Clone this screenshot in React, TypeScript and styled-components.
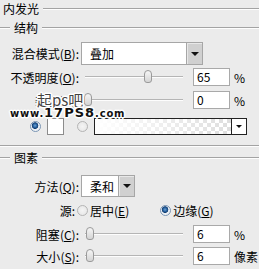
import React from 'react'
import styled, { createGlobalStyle } from 'styled-components'

const GlobalStyle = createGlobalStyle`
  body {
    margin: 0;
    background: #ebebeb;
    font-family: "Noto Sans CJK SC", "Noto Sans", sans-serif;
    font-size: 12px;
    color: #000;
  }
`

const Panel = styled.div`
  position: relative;
  width: 259px;
  height: 269px;
  overflow: hidden;
  background: #ebebeb;
  display: flex;
  flex-direction: column;
`

const groove = `
  height: 0;
  border-top: 1px solid #a3a3a3;
  border-bottom: 1px solid #fdfdfd;
`

const outline = `
  text-shadow:
    1px 0 #fff, -1px 0 #fff, 0 1px #fff, 0 -1px #fff,
    1px 1px #fff, -1px -1px #fff, 1px -1px #fff, -1px 1px #fff,
    2px 0 #f4f4f4, -2px 0 #f4f4f4, 0 2px #f4f4f4, 0 -2px #f4f4f4;
`

const Legend = styled.div<{ $indent: number; $height: number }>`
  display: flex;
  align-items: center;
  height: ${({ $height }) => $height}px;
  line-height: 14px;
  padding-left: ${({ $indent }) => ($indent ? 0 : 3)}px;

  &::before {
    content: '';
    width: ${({ $indent }) => $indent}px;
    margin-right: ${({ $indent }) => ($indent ? 4 : 0)}px;
    ${groove}
  }

  &::after {
    content: '';
    flex: 1;
    margin-left: 4px;
    ${groove}
  }
`

const Divider = styled.div`
  ${groove}
  margin-top: 10px;
`

const Row = styled.div<{ $height: number; $gap?: number }>`
  display: flex;
  align-items: center;
  height: ${({ $height }) => $height}px;
  margin-top: ${({ $gap }) => $gap ?? 0}px;
`

const Label = styled.div<{ $width?: number }>`
  width: ${({ $width }) => $width ?? 79}px;
  text-align: right;
  white-space: nowrap;
  flex: none;
`

const Select = styled.div<{ $width: number }>`
  display: flex;
  width: ${({ $width }) => $width}px;
  height: 100%;
  margin-left: 2px;
  box-sizing: border-box;
  border: 1px solid #a6a6a6;
  background: #fff;
`

const SelectText = styled.div`
  flex: 1;
  display: flex;
  align-items: center;
  padding-left: 8px;
`

const SelectButton = styled.div`
  width: 15px;
  display: flex;
  align-items: center;
  justify-content: center;
  background: #d0d0d0;
  border-left: 1px solid #a6a6a6;
  box-shadow: inset 1px 1px 0 #e8e8e8;

  &::after {
    content: '';
    border-left: 4px solid transparent;
    border-right: 4px solid transparent;
    border-top: 4px solid #111;
  }
`

const Slider = styled.div`
  position: relative;
  width: 98px;
  height: 14px;
  margin-left: 6px;
  flex: none;

  &::before {
    content: '';
    position: absolute;
    left: 0;
    right: 0;
    top: 6px;
    ${groove}
    border-top-color: #b5b5b5;
  }
`

const Thumb = styled.div`
  position: absolute;
  top: 0;
  width: 8px;
  height: 13px;
  margin-left: -4px;
  box-sizing: border-box;
  border: 1px solid #9a9a9a;
  border-radius: 4px 4px 3px 3px;
  background: linear-gradient(#f6f6f6, #d4d4d4);
`

const NumberBox = styled.div`
  width: 37px;
  height: 18px;
  margin-left: 10px;
  box-sizing: border-box;
  border: 1px solid #a9a9a9;
  background: #fff;
  padding-left: 3px;
  line-height: 16px;
  flex: none;
`

const Unit = styled.div`
  margin-left: 4px;
  white-space: nowrap;
`

const Radio = styled.div<{ $checked?: boolean; $left: number }>`
  width: 11px;
  height: 11px;
  margin-left: ${({ $left }) => $left}px;
  box-sizing: border-box;
  border-radius: 50%;
  border: 1px solid ${({ $checked }) => ($checked ? '#7a95b4' : '#b4b4b4')};
  background: ${({ $checked }) =>
    $checked
      ? 'radial-gradient(circle at 45% 40%, #6fa2d2 0, #245f9e 2px, #163f70 3px, #e9eef4 3.6px, #f7f7f7 100%)'
      : 'radial-gradient(circle, #f4f4f4, #e4e4e4)'};
  flex: none;
`

const Swatch = styled.div`
  width: 17px;
  height: 17px;
  margin-left: 6px;
  box-sizing: border-box;
  border: 1px solid #8c8c8c;
  background: #fff;
  flex: none;
`

const Gradient = styled.div`
  display: flex;
  width: 153px;
  height: 17px;
  margin-left: 6px;
  box-sizing: border-box;
  border: 1px solid #222;
  flex: none;
`

const GradientStrip = styled.div`
  flex: 1;
  background:
    linear-gradient(90deg, #fff 0%, rgba(255, 255, 255, 0.2) 100%),
    conic-gradient(#d6d6d6 25%, #fff 0 50%, #d6d6d6 0 75%, #fff 0) 0 0 / 8px 8px;
`

const GradientButton = styled.div`
  width: 14px;
  display: flex;
  align-items: center;
  justify-content: center;
  background: #fff;
  border-left: 1px solid #222;

  &::after {
    content: '';
    border-left: 3px solid transparent;
    border-right: 3px solid transparent;
    border-top: 3px solid #111;
  }
`

const Option = styled.div`
  margin-left: 2px;
  white-space: nowrap;
`

const Watermark = styled.div`
  position: absolute;
  left: 10px;
  top: 92px;
  display: flex;
  flex-direction: column;
  align-items: flex-start;
  pointer-events: none;
`

const MarkTitle = styled.div`
  margin-left: 27px;
  font-size: 15px;
  line-height: 16px;
  color: #444;
  ${outline}
`

const MarkSite = styled.div`
  font-family: "DejaVu Sans", sans-serif;
  font-weight: bold;
  font-size: 10px;
  line-height: 10px;
  letter-spacing: 0.8px;
  color: #111;
  ${outline}

  b {
    font-size: 13px;
    letter-spacing: 1px;
  }
`

const Key: React.FC<{ k: string }> = ({ k }) => (
  <>
    (<u>{k}</u>)
  </>
)

const SliderRow: React.FC<{
  label: React.ReactNode
  value: number
  max: number
  unit: string
  gap: number
  height: number
}> = ({ label, value, max, unit, gap, height }) => (
  <Row $height={height} $gap={gap}>
    <Label>{label}</Label>
    <Slider>
      <Thumb style={{ left: 3 + (value / max) * 92 }} />
    </Slider>
    <NumberBox>{value}</NumberBox>
    <Unit>{unit}</Unit>
  </Row>
)

export default function App() {
  return (
    <>
      <GlobalStyle />
      <Panel>
        <Legend $indent={0} $height={18}>内发光</Legend>
        <Legend $indent={10} $height={19}>结构</Legend>

        <Row $height={23} $gap={5}>
          <Label>混合模式<Key k='B' />:</Label>
          <Select $width={122}>
            <SelectText>叠加</SelectText>
            <SelectButton />
          </Select>
        </Row>
        <SliderRow label={<>不透明度<Key k='O' />:</>} value={65} max={100} unit='%' gap={3} height={18} />
        <SliderRow label={<>杂色<Key k='N' />:</>} value={0} max={100} unit='%' gap={5} height={18} />

        <Row $height={17} $gap={9}>
          <Radio $checked $left={30} />
          <Swatch />
          <Radio $left={13} />
          <Gradient>
            <GradientStrip />
            <GradientButton />
          </Gradient>
        </Row>

        <Divider />
        <Legend $indent={10} $height={22}>图素</Legend>

        <Row $height={22} $gap={6}>
          <Label>方法<Key k='Q' />:</Label>
          <Select $width={54}>
            <SelectText>柔和</SelectText>
            <SelectButton />
          </Select>
        </Row>

        <Row $height={14} $gap={6}>
          <Label $width={75}>源:</Label>
          <Radio $left={2} />
          <Option>居中<Key k='E' /></Option>
          <Radio $checked $left={31} />
          <Option>边缘<Key k='G' /></Option>
        </Row>

        <SliderRow label={<>阻塞<Key k='C' />:</>} value={6} max={250} unit='%' gap={8} height={18} />
        <SliderRow label={<>大小<Key k='S' />:</>} value={6} max={250} unit='像素' gap={4} height={18} />

        <Watermark>
          <MarkTitle>起ps吧</MarkTitle>
          <MarkSite>www.<b>17PS8</b>.com</MarkSite>
        </Watermark>
      </Panel>
    </>
  )
}
